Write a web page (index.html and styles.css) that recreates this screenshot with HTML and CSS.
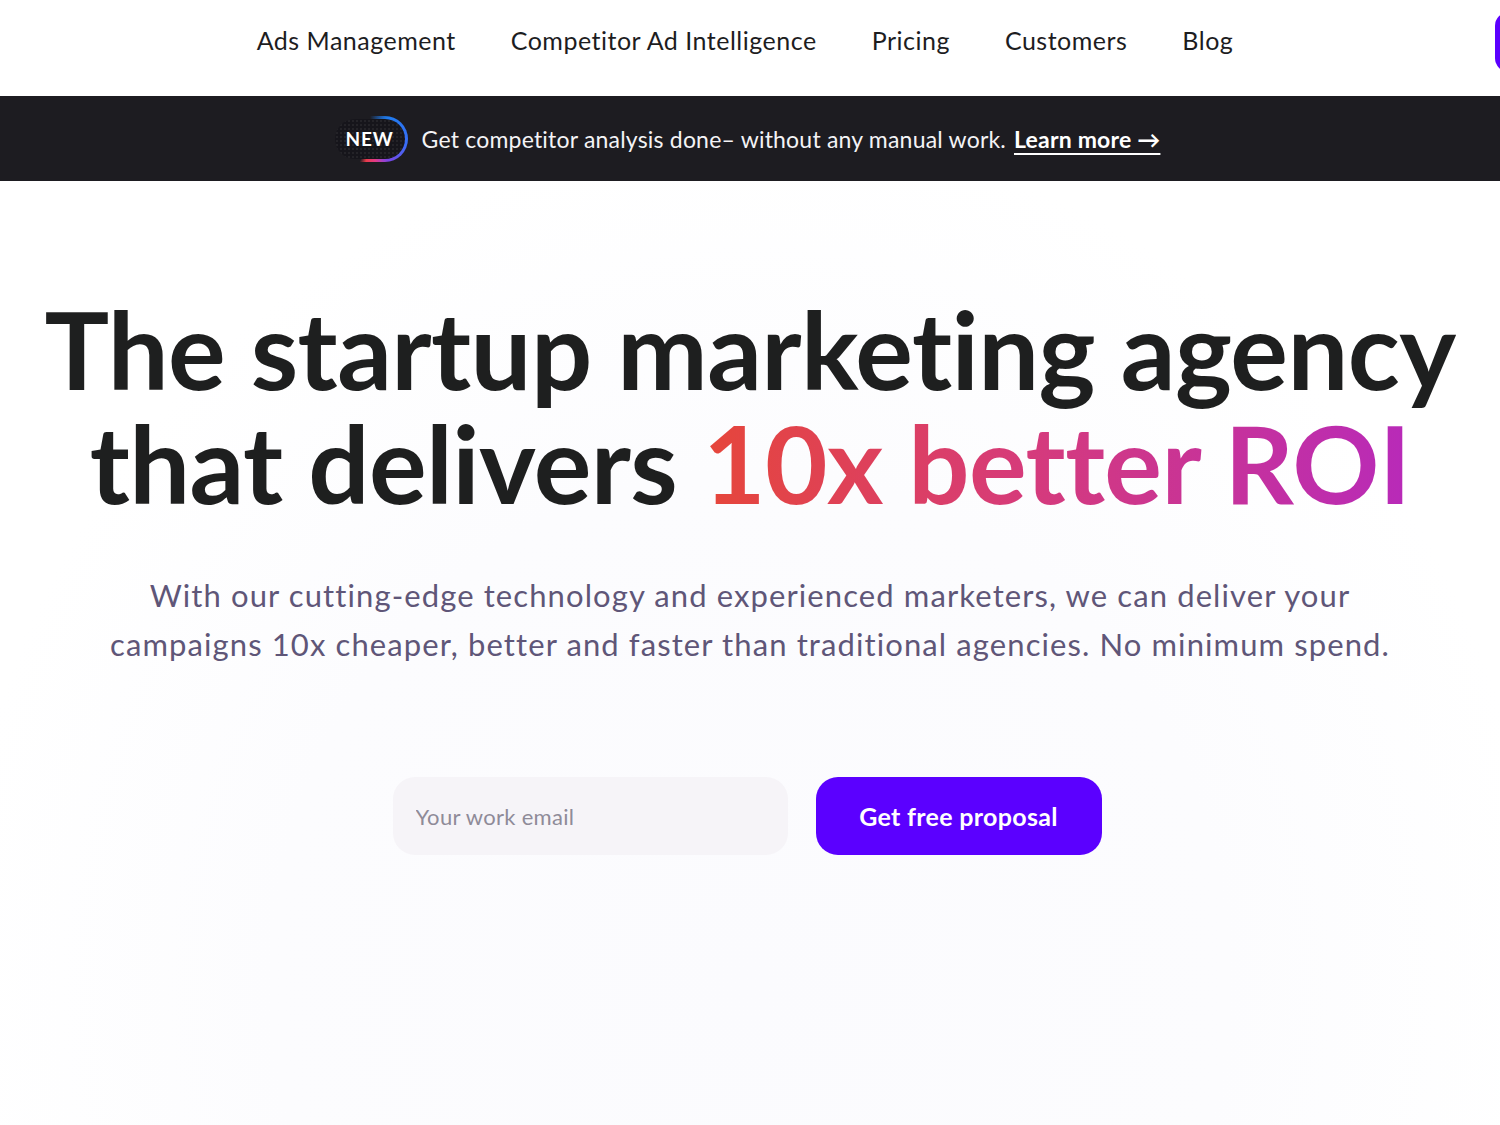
FILE: index.html
```html
<!DOCTYPE html>
<html lang="en">
<head>
    <meta charset="UTF-8">
    <meta name="viewport" content="width=device-width, initial-scale=1.0">
    <title>The startup marketing agency</title>
    <link rel="stylesheet" href="styles.css">
</head>
<body>

    <header class="topbar">
        <nav class="nav">
            <a href="#">Ads Management</a>
            <a href="#">Competitor Ad Intelligence</a>
            <a href="#">Pricing</a>
            <a href="#">Customers</a>
            <a href="#">Blog</a>
        </nav>
        <a href="#" class="navButton" aria-label="Get started"></a>
    </header>

    <div class="announce">
        <span class="badge">NEW</span>
        <span class="announceText">Get competitor analysis done– without any manual work.</span>
        <a href="#" class="learnMore">Learn more &rarr;</a>
    </div>

    <section class="hero">
        <h1>The startup marketing agency<br>that delivers <span class="highlight">10x better ROI</span></h1>

        <p class="lead">With our cutting-edge technology and experienced marketers, we can deliver your campaigns 10x cheaper, better and faster than traditional agencies. No minimum spend.</p>

        <form class="signup">
            <input type="email" placeholder="Your work email">
            <button type="button">Get free proposal</button>
        </form>
    </section>

</body>
</html>
```

FILE: styles.css
```css
body {
    margin: 0;
    font-family: 'Lato', 'Noto Sans', sans-serif;
    color: #1f1f1f;
    background: #fff;
    overflow-x: hidden;
}

a {
    text-decoration: none;
    color: inherit;
}

.topbar {
    height: 96px;
    display: flex;
    align-items: center;
    justify-content: center;
    position: relative;
    overflow: hidden;
    background: #fff;
}

.nav {
    display: flex;
    gap: 55px;
    margin-right: 10px;
    margin-bottom: 16px;
}

.nav a {
    font-size: 25px;
    color: #1d1d1f;
    letter-spacing: 0.5px;
}

.navButton {
    position: absolute;
    right: -200px;
    top: 12px;
    width: 205px;
    height: 60px;
    border-radius: 14px;
    background: #5b00ff;
}

.announce {
    height: 85px;
    background: #1d1c21;
    display: flex;
    align-items: center;
    justify-content: center;
    gap: 14px;
    color: #f4f3f6;
    font-size: 23px;
    letter-spacing: 0.2px;
    padding-right: 8px;
}

.badge {
    flex-shrink: 0;
    width: 76px;
    height: 46px;
    box-sizing: border-box;
    border-radius: 23px;
    border: 3px solid transparent;
    background:
        radial-gradient(circle, rgba(255, 255, 255, 0.06) 1px, transparent 1px) 0 0 / 4px 4px padding-box,
        linear-gradient(#16151b, #16151b) padding-box,
        conic-gradient(from 0deg, #1d1c21 0deg, #1f7cf0 40deg, #3b6cf5 100deg, #7b44e6 140deg, #e03a8a 165deg, #ea3b4a 190deg, #1d1c21 205deg, #1d1c21 360deg) border-box;
    display: flex;
    align-items: center;
    justify-content: center;
    font-weight: 700;
    font-size: 19px;
    letter-spacing: 0.8px;
    color: #fff;
}

.learnMore {
    font-weight: 700;
    text-decoration: underline;
    text-underline-offset: 5px;
    text-decoration-thickness: 2px;
    margin-left: -6px;
    color: #fff;
}

.hero {
    text-align: center;
    padding: 110px 0 270px;
    background: radial-gradient(ellipse at 50% 85%, #fbfbfe 0%, #fcfcfe 45%, #ffffff 75%);
}

h1 {
    margin: 0;
    font-size: 108px;
    font-weight: 700;
    line-height: 114px;
    letter-spacing: -0.6px;
    color: #1e1f1f;
}

.highlight {
    background: linear-gradient(90deg, #e6463a 0%, #d63b7a 45%, #b82ab9 100%);
    -webkit-background-clip: text;
    background-clip: text;
    color: transparent;
}

.lead {
    max-width: 1320px;
    margin: 52px auto 0;
    font-size: 31px;
    line-height: 49px;
    color: #5f5678;
    letter-spacing: 1.1px;
}

.signup {
    display: flex;
    justify-content: center;
    gap: 28px;
    margin-top: 108px;
    padding-right: 6px;
}

.signup input {
    width: 395px;
    height: 78px;
    box-sizing: border-box;
    border: none;
    border-radius: 22px;
    background: #f6f4f8;
    padding: 0 23px;
    font-family: 'Lato', 'Noto Sans', sans-serif;
    font-size: 22px;
    letter-spacing: 0.3px;
    color: #333;
}

.signup input::placeholder {
    color: #8f8b98;
}

.signup button {
    width: 286px;
    height: 78px;
    border: none;
    border-radius: 22px;
    background: #5b00ff;
    color: #fff;
    font-family: 'Lato', 'Noto Sans', sans-serif;
    font-size: 25px;
    font-weight: 700;
    letter-spacing: 0.3px;
    cursor: pointer;
}
```
